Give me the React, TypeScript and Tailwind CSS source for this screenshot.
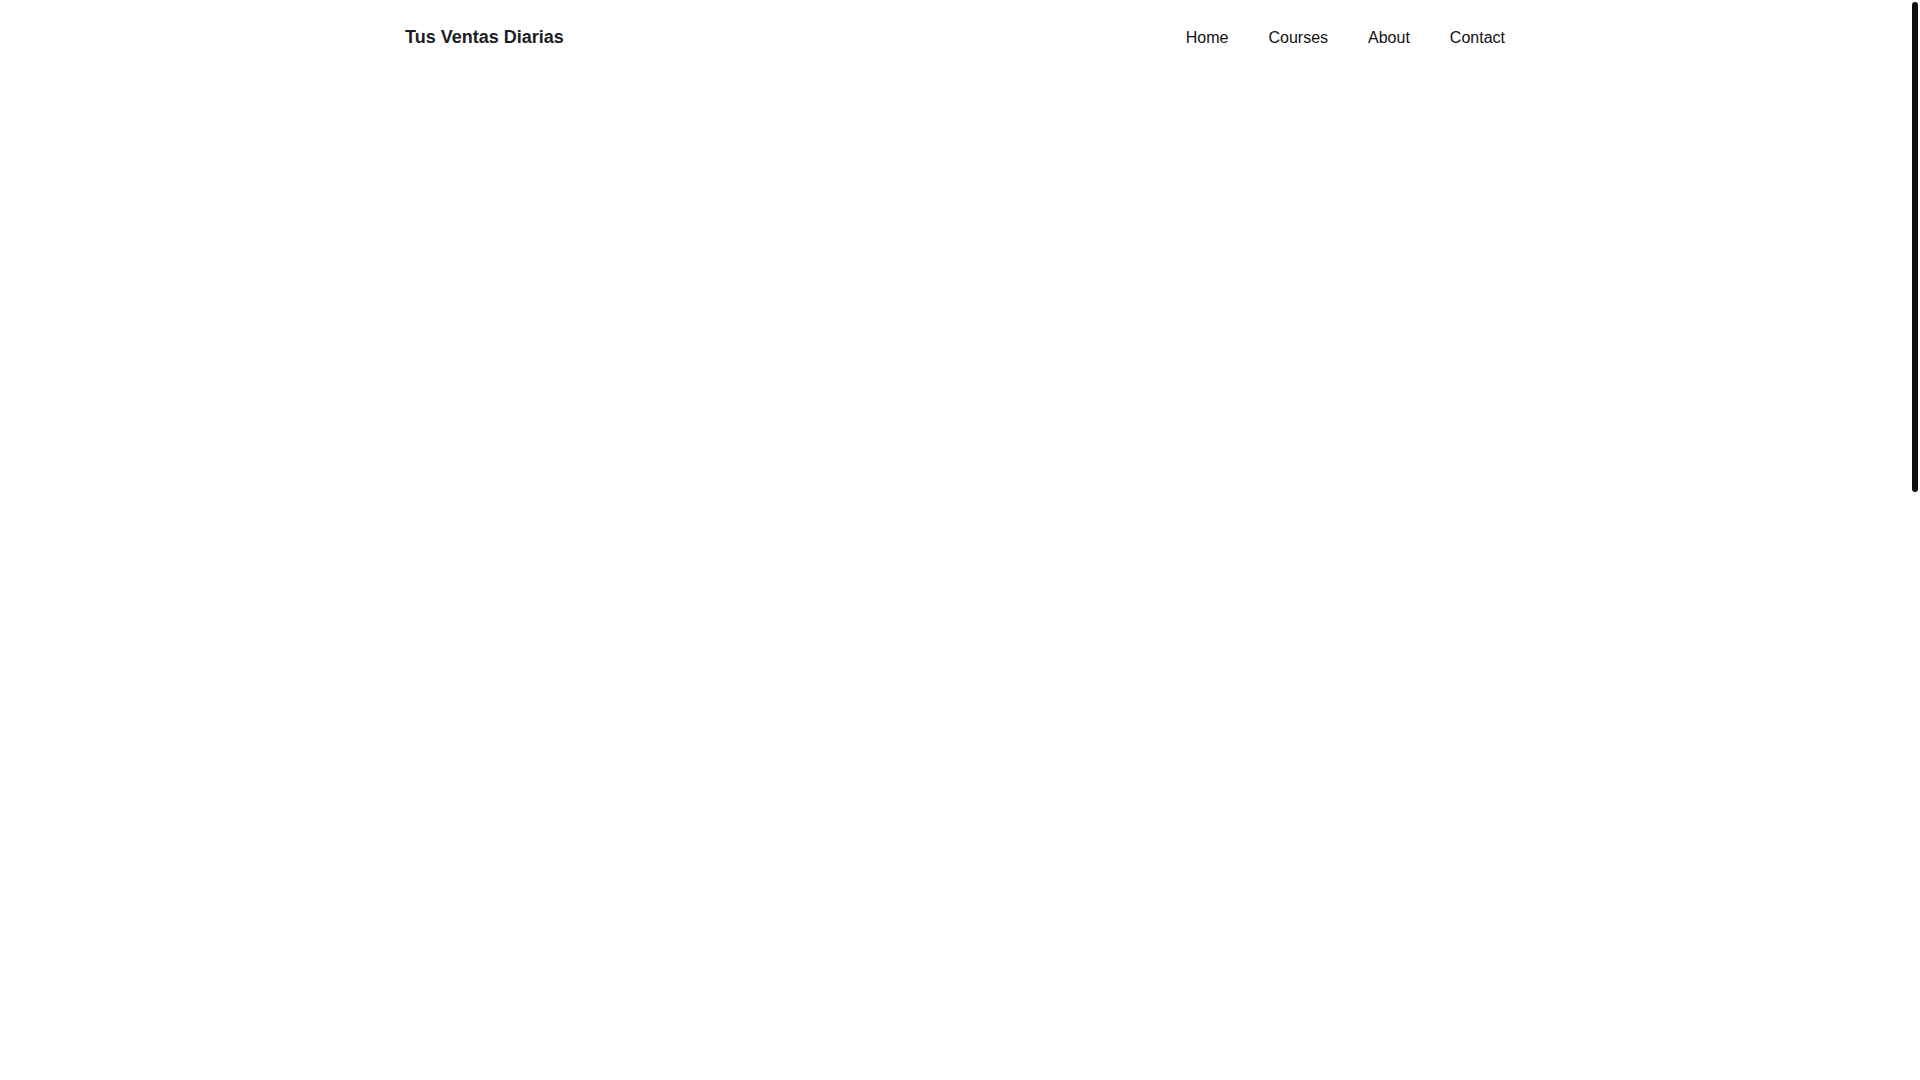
export default function App() {
  const links = ['Home', 'Courses', 'About', 'Contact'];

  return (
    <div className="relative min-h-screen bg-white pr-[10px] font-['Liberation_Sans',Arial,sans-serif]">
      <header className="mx-auto flex h-[74px] w-[1100px] items-center justify-between">
        <a href="#" className="text-[18px] font-bold text-[#1c2025]">
          Tus Ventas Diarias
        </a>
        <nav className="flex items-center gap-10 pt-[2px]">
          {links.map((l) => (
            <a key={l} href="#" className="text-[16px] text-[#111111]">
              {l}
            </a>
          ))}
        </nav>
      </header>
      <main />

      {/* scrollbar drawn by hand, headless browser hides the real one */}
      <div className="fixed right-0 top-0 h-screen w-[10px] bg-white">
        <div className="absolute right-[2px] top-[2px] h-[490px] w-[6px] rounded-full bg-[#111111]" />
      </div>
    </div>
  );
}
